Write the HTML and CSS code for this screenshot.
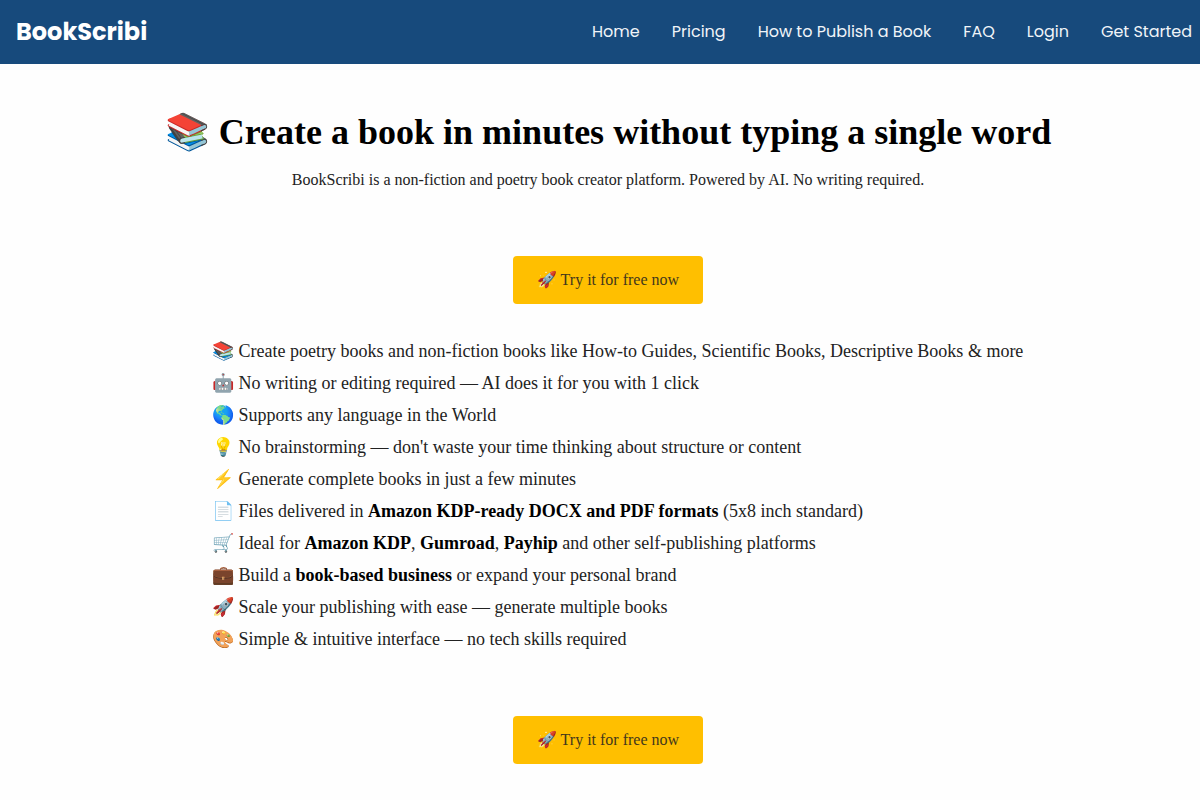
FILE: index.html
```html
<!DOCTYPE html>
<html lang="en">
<head>
<meta charset="utf-8">
<title>BookScribi</title>
<link rel="stylesheet" href="styles.css">
</head>
<body>
<header class="navbar">
  <a class="brand" href="#">BookScribi</a>
  <nav class="links">
    <a href="#">Home</a>
    <a href="#">Pricing</a>
    <a href="#">How to Publish a Book</a>
    <a href="#">FAQ</a>
    <a href="#">Login</a>
    <a href="#">Get Started</a>
  </nav>
</header>
<main class="page">
  <h1 class="title">📚 Create a book in minutes without typing a single word</h1>
  <p class="subtitle">BookScribi is a non-fiction and poetry book creator platform. Powered by AI. No writing required.</p>
  <button class="cta" type="button">🚀 Try it for free now</button>
  <ul class="features">
    <li>📚 Create poetry books and non-fiction books like How-to Guides, Scientific Books, Descriptive Books &amp; more</li>
    <li>🤖 No writing or editing required — AI does it for you with 1 click</li>
    <li>🌎 Supports any language in the World</li>
    <li>💡 No brainstorming — don't waste your time thinking about structure or content</li>
    <li>⚡ Generate complete books in just a few minutes</li>
    <li>📄 Files delivered in <strong>Amazon KDP-ready DOCX and PDF formats</strong> (5x8 inch standard)</li>
    <li>🛒 Ideal for <strong>Amazon KDP</strong>, <strong>Gumroad</strong>, <strong>Payhip</strong> and other self-publishing platforms</li>
    <li>💼 Build a <strong>book-based business</strong> or expand your personal brand</li>
    <li>🚀 Scale your publishing with ease — generate multiple books</li>
    <li>🎨 Simple &amp; intuitive interface — no tech skills required</li>
  </ul>
  <button class="cta" type="button">🚀 Try it for free now</button>
</main>
</body>
</html>
```
FILE: styles.css
```css
* {
  box-sizing: border-box;
}

body {
  margin: 0;
  background: #fefefe;
  color: #222;
  font-family: "Liberation Serif", serif;
}

.navbar {
  display: flex;
  align-items: center;
  justify-content: space-between;
  min-height: 64px;
  padding: 0 8px 2px 16px;
  background: #174a7c;
  font-family: Poppins, Inter, sans-serif;
}

.navbar a {
  color: #fff;
  text-decoration: none;
}

.navbar .links a {
  color: #f0f4f8;
}

.brand {
  font-size: 24px;
  font-weight: 700;
}

.links {
  display: flex;
  gap: 32px;
  font-size: 16px;
}

.page {
  display: flex;
  flex-direction: column;
  align-items: center;
  padding: 48px 0 32px 16px;
}

.title {
  margin: 0;
  color: #000;
  font-size: 36px;
  line-height: 40px;
}

.subtitle {
  margin: 16px 0 64px;
  font-size: 16px;
  line-height: 24px;
}

.cta {
  padding: 12px 24px;
  border: 0;
  border-radius: 4px;
  background: #ffbf00;
  color: #43381c;
  font-family: inherit;
  font-size: 16px;
  line-height: 24px;
}

.features {
  width: 100%;
  max-width: 856px;
  margin: 31px 0 61px;
  padding: 0 0 0 32px;
  list-style: none;
  font-size: 18px;
  line-height: 32px;
}

.features strong {
  color: #000;
}
```
